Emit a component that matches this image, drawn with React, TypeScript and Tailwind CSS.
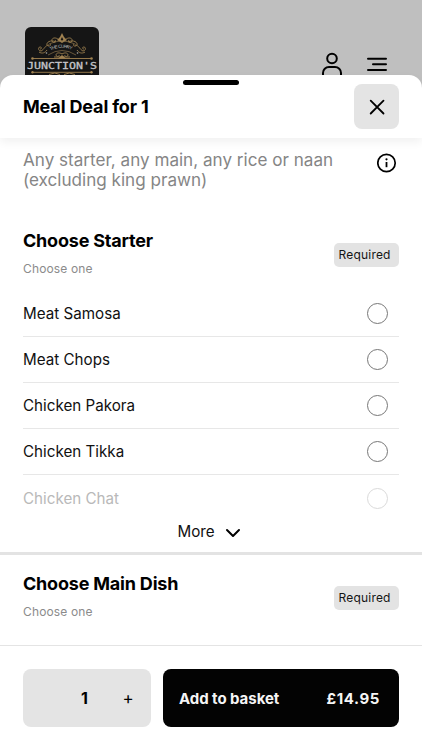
import type { ReactNode } from "react"

type Option = {
  name: string
  faded?: boolean
}

const starters: Option[] = [
  { name: "Meat Samosa" },
  { name: "Meat Chops" },
  { name: "Chicken Pakora" },
  { name: "Chicken Tikka" },
  { name: "Chicken Chat", faded: true },
]

const Logo = () => (
  <svg
    className="ml-[25px] h-12 w-[74px] shrink-0 self-end"
    viewBox="0 0 74 48"
    fill="none"
  >
    <path d="M0 48V6a6 6 0 0 1 6-6h62a6 6 0 0 1 6 6v42z" fill="#151515" />
    <defs>
      <path id="arch" d="M25.500 23.500Q37 18 48.500 23.500" />
      <g id="scroll" stroke="#8f7549" strokeWidth="1">
        <path d="M35 14c-4-5-9-3-8 0s5 1 3-1M31 15c-6-3-10 1-9 3s5 1 3-1" />
        <path d="M24 18c-4 0-5 5-8 6-3 0-3-4-1-4s2 2 0 2M22 23c-2 3-5 4-8 2" />
        <path d="M37 27c-3-2-6-1-6 1s4 2 3 0M37 30h-8" />
      </g>
    </defs>
    <use href="#scroll" />
    <use href="#scroll" transform="matrix(-1 0 0 1 74 0)" />
    <path d="m37 6 2 4 3 3-5 3-5-3 3-3z" fill="#a08251" />
    <path d="m37 10 1.300 2.500L37 14l-1.300-1.500z" fill="#151515" />
    <path d="M23 28q14-9 28 0M24 17q13-6 26 0" stroke="#8b734b" strokeWidth=".7" />
    <circle cx="21.500" cy="26" r=".8" fill="#aaa" />
    <circle cx="52.500" cy="26" r=".8" fill="#aaa" />
    <text
      fill="#bdbdbd"
      fontSize="4.6"
      className="font-['Liberation_Sans',sans-serif]"
    >
      <textPath href="#arch" textLength="22">
        THE CURRY
      </textPath>
    </text>
    <path d="M7 31.500h60" stroke="#a08251" strokeWidth=".9" />
    <path d="m37 28 4 3.500h-8z" fill="#a08251" />
    <circle cx="7.500" cy="31.500" r="1.300" fill="#a08251" />
    <circle cx="66.500" cy="31.500" r="1.300" fill="#a08251" />
    <text
      x="2"
      y="41.700"
      fill="#c4c4c8"
      fontSize="9.4"
      textLength="70"
      lengthAdjust="spacingAndGlyphs"
      className="font-['DejaVu_Sans_Mono',monospace]"
      stroke="#c4c4c8"
      strokeWidth=".3"
    >
      JUNCTION'S
    </text>
    <path d="M7 45.300h60M24 47.500q6-3 11 0M39 47.500q5-3 11 0" stroke="#a08251" strokeWidth=".9" />
    <circle cx="7.500" cy="45.300" r="1.200" fill="#a08251" />
    <circle cx="66.500" cy="45.300" r="1.200" fill="#a08251" />
  </svg>
)

const TopBar = () => (
  <div className="flex h-[75px] justify-between bg-[#bfbfbf]">
    <Logo />
    <div className="flex items-start pr-[34px]">
      <svg
        className="mt-[52px] mr-[22px] h-[27px] w-[24px]"
        viewBox="0 0 24 27"
        fill="none"
        stroke="#000"
        strokeWidth="2"
        strokeLinecap="round"
      >
        <circle cx="12" cy="6.500" r="4.800" />
        <path d="M3 24.500v-3.500a6 6 0 0 1 6-6h6a6 6 0 0 1 6 6v3.500" />
      </svg>
      <svg
        className="mt-14 h-[17px] w-[22px]"
        viewBox="0 0 22 17"
        stroke="#000"
        strokeWidth="2"
        strokeLinecap="round"
      >
        <path d="M2 2.700h18M7 8.300h13M2 14h18" />
      </svg>
    </div>
  </div>
)

const SectionHeader = ({ title }: { title: string }) => (
  <div className="flex justify-between px-[23px]">
    <div>
      <h2 className="pt-px text-[18px] leading-6 font-bold tracking-[-0.2px]">{title}</h2>
      <p className="mt-[6px] text-[12px] leading-5 tracking-[0.15px] text-[#8b8b8b]">
        Choose one
      </p>
    </div>
    <span className="mt-[15px] h-6 w-[65px] rounded-[5px] bg-[#e3e3e3] pl-[4.5px] text-[12px] leading-6 tracking-[0.2px] text-[#151515]">
      Required
    </span>
  </div>
)

const OptionRow = ({ option }: { option: Option }) => (
  <label
    className={
      option.faded
        ? "flex h-[46px] items-center justify-between pr-[11px] text-[#b9b9b9]"
        : "flex h-[46px] items-center justify-between border-b-[1.5px] border-[#e7e7e7] pr-[11px] text-[#111]"
    }
  >
    <span className="pt-[2px] text-[15.2px]">{option.name}</span>
    <span
      className={
        option.faded
          ? "size-[21px] rounded-full border border-[#dadada]"
          : "size-[21px] rounded-full border border-[#777]"
      }
    />
  </label>
)

const IconButton = ({ children }: { children: ReactNode }) => (
  <button className="flex size-[45px] items-center justify-center rounded-lg bg-[#e4e4e4]">
    {children}
  </button>
)

const App = () => {
  return (
    <div className="flex h-[750px] w-[422px] flex-col overflow-hidden bg-[#bfbfbf] font-['Inter','Liberation_Sans',sans-serif] text-black">
      <TopBar />

      <div className="flex min-h-0 flex-1 flex-col rounded-t-[13px] bg-white">
        {/* Sheet header */}
        <div className="relative flex h-[63px] shrink-0 items-center justify-between rounded-t-[13px] px-[23px] shadow-[0_4px_10px_rgba(0,0,0,0.06)]">
          <span className="absolute top-[5px] left-[183px] h-[5px] w-14 rounded-full bg-black" />
          <h1 className="text-[18px] leading-[26px] font-bold tracking-[-0.15px]">
            Meal Deal for 1
          </h1>
          <IconButton>
            <svg
              className="size-[18px]"
              viewBox="0 0 18 18"
              stroke="#000"
              strokeWidth="1.800"
              strokeLinecap="round"
            >
              <path d="m2.700 2.700 12.800 12.800M15.500 2.700 2.700 15.500" />
            </svg>
          </IconButton>
        </div>

        {/* Scrolling content */}
        <div className="flex min-h-0 flex-1 flex-col overflow-hidden">
          <div className="flex h-[90px] shrink-0 items-start justify-between pt-[11px] pr-[25px] pl-[23px]">
            <p className="w-[330px] pt-px text-[17.1px] leading-5 text-[#858585]">
              Any starter, any main, any rice or naan
              <br />
              (excluding king prawn)
            </p>
            <svg className="mt-1 size-5" viewBox="0 0 20 20" fill="none">
              <circle cx="9.500" cy="10" r="8.700" stroke="#000" strokeWidth="1.700" />
              <circle cx="9.500" cy="6.300" r="1.100" fill="#000" />
              <path d="M9.500 9v5.200" stroke="#000" strokeWidth="1.800" />
            </svg>
          </div>

          <SectionHeader title="Choose Starter" />
          <div className="mt-3 px-[23px]">
            {starters.map((option) => (
              <OptionRow key={option.name} option={option} />
            ))}
          </div>
          <button className="flex h-[31px] shrink-0 items-center justify-center gap-[10px] pr-[4px] pb-[9px] text-[15.2px] text-[#111]">
            More
            <svg
              className="mt-px h-[10px] w-4"
              viewBox="0 0 16 10"
              fill="none"
              stroke="#000"
              strokeWidth="2"
              strokeLinecap="round"
              strokeLinejoin="round"
            >
              <path d="m2 2 6 6 6-6" />
            </svg>
          </button>

          <div className="border-t-[3px] border-[#e3e3e3] pt-4">
            <SectionHeader title="Choose Main Dish" />
          </div>
        </div>

        {/* Basket bar */}
        <div className="flex h-[105px] shrink-0 gap-3 border-t border-[#e4e4e4] px-[23px] pt-[23px]">
          <div className="flex h-[58px] w-[128px] items-center rounded-lg bg-[#e4e4e4] text-base">
            <span className="ml-[58px] w-[9px] font-bold">1</span>
            <button className="ml-8 w-3 text-[17px] leading-none">+</button>
          </div>
          <button className="flex h-[58px] flex-1 items-center justify-between rounded-lg bg-[#030303] pt-[2px] pr-[19px] pl-4 text-[15px] font-bold text-[#f5f5f5]">
            <span className="tracking-[-0.05px]">Add to basket</span>
            <span className="tracking-[0.6px]">£14.95</span>
          </button>
        </div>
      </div>
    </div>
  )
}

export default App
